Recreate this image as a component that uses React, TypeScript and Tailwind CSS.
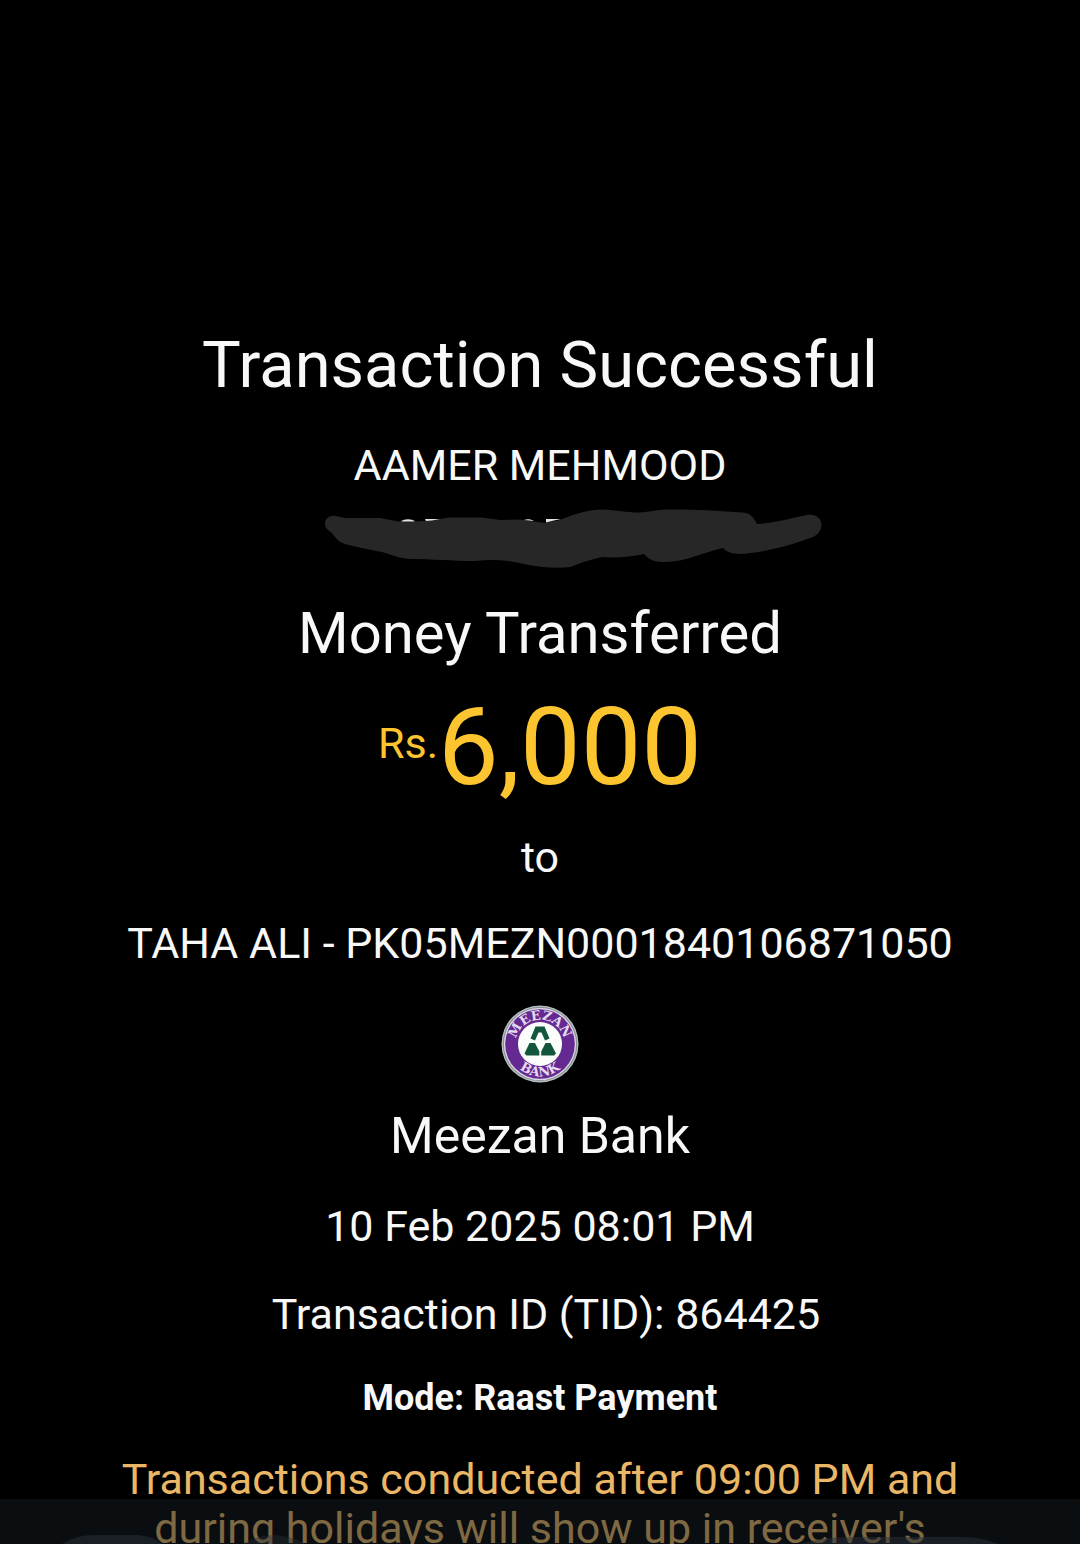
function BankLogo() {
  return (
    <svg className="mt-9 size-[78px] shrink-0" viewBox="0 0 78 78" role="img" aria-label="Meezan Bank">
      <defs>
        <path id="arc-top" d="M 15.66 45.25 A 24.2 24.2 0 1 1 62.34 45.25" />
        <path id="arc-bottom" d="M 6.8 39 A 32.2 32.2 0 0 0 71.2 39" />
      </defs>
      <circle cx="39" cy="39" r="38.5" fill="#b9bfc4" />
      <circle cx="39" cy="39" r="37.2" fill="#7f8f8d" />
      <circle cx="39" cy="39" r="36.2" fill="#d9d3e4" />
      <circle cx="39" cy="39" r="34.8" fill="#652a91" />
      <circle cx="39" cy="39" r="22" fill="#fbfdfb" />
      <g fill="#e6daee" fontFamily="DejaVu Serif, serif" fontWeight="700" textAnchor="middle" fontSize="13">
        <text>
          <textPath href="#arc-top" startOffset="50%">MEEZAN</textPath>
        </text>
        <text>
          <textPath href="#arc-bottom" startOffset="50%">BANK</textPath>
        </text>
      </g>
      <g fill="#12573c">
        <path d="M34.5 21.5H43.5L48.5 33.5L44 35.5L40.5 27.5H37.5L34 35.5L29.5 33.5Z" />
        <path d="M28.5 38H34L38.3 46.5V50.5H25.5L23.5 48.5Z" />
        <path d="M44.5 38H49.5L55 48.5L53 50.5H40.2V46.5Z" />
      </g>
    </svg>
  );
}

function HiddenAccount() {
  return (
    <svg className="mt-[18px] h-[60px] w-[600px] shrink-0" viewBox="240 509 600 60" role="img" aria-label="Account number hidden">
      <path
        fill="#272727"
        d="M325 524C325 518 330 515 336 516L345 518H380L398 521.5H415L430 520.5L450 517.5H482L500 520L520 519.5L545 523L560 520C575 514 588 509.5 603 509.5C616 510 626 512.5 640 512.5C655 511 660 509 675 509.5C700 509.5 722 511 742 512.5C752 513 754 519 757 524C774 523 792 518 807 515C824 513 826 531 813 537C794 544 770 551 750 553C737 555 729 554 723 548C704 552 685 562 665 562C656 562 650 561 644 554C632 557 616 558 602 557C588 560 578 564 571 567C555 569 539 567 524 564C508 560 492 559 475 561C452 561 432 559 410 559C399 558 392 555 382 552C368 549 352 547 340 542C334 537 334 534 328 530C326 528 325 526 325 524Z"
      />
      <g fill="#e4e4e4">
        <path d="M401 521.5C404 518.5 412 518.5 415 521.5Z" />
        <path d="M425 519H440L432 520.5L426 521Z" />
        <path d="M524 520C527 518.5 531 519 534 521Z" />
        <path d="M546 519H561L554 520.5L546 522.5Z" />
      </g>
    </svg>
  );
}

function BottomOverlay() {
  return (
    <div className="absolute inset-x-0 bottom-0 h-[45px] overflow-hidden bg-[#141c20]/50" aria-hidden="true">
      <svg className="h-full w-full" viewBox="0 0 1080 45" preserveAspectRatio="none">
        <path d="M62 45Q76 36 94 36H138Q154 37 162 45Z" fill="#273037" fillOpacity=".5" />
        <path d="M242 45Q258 36 275 36Q292 37 306 45Z" fill="#273037" fillOpacity=".4" />
        <path d="M800 45Q820 38 850 38H964Q982 38 998 45Z" fill="#273037" fillOpacity=".5" />
      </svg>
    </div>
  );
}

export default function App() {
  return (
    <main className="relative flex h-screen flex-col items-center overflow-hidden bg-black px-4 pt-[327px] text-center font-['Roboto',sans-serif] text-[43px] leading-[52px] text-[#f8f8f8]">
      <h1 className="text-[65px] leading-[76px]">Transaction Successful</h1>
      <p className="mt-9">AAMER MEHMOOD</p>
      <HiddenAccount />
      <h2 className="mt-8 text-[58px] leading-[64px]">Money Transferred</h2>
      <p className="mt-[18px] flex text-[108px] leading-[128px] text-[#fcc52f]">
        <span className="text-[43px] leading-[120px]">Rs.</span>
        <span>6,000</span>
      </p>
      <p className="mt-5">to</p>
      <p className="mt-[34px]">TAHA ALI - PK05MEZN0001840106871050</p>
      <BankLogo />
      <p className="mt-[23px] text-[50px] leading-[60px]">Meezan Bank</p>
      <p className="mt-[34px]">10 Feb 2025 08:01 PM</p>
      <p className="mt-9 pl-3">Transaction ID (TID): 864425</p>
      <p className="mt-9 text-[36px] leading-[44px] font-bold">Mode: Raast Payment</p>
      <p className="mt-[35px] w-[880px] max-w-full shrink-0 leading-[49px] text-[#eab766]">
        Transactions conducted after 09:00 PM and during holidays will show up in receiver's
      </p>
      <BottomOverlay />
    </main>
  );
}
